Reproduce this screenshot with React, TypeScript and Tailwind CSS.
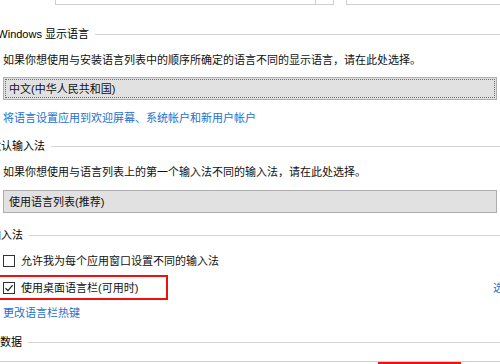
import type { ReactNode } from 'react';

function SectionHeader({ label, width }: { label: string; width: number }) {
  return (
    <div className="flex h-4 items-center">
      <div className="flex shrink-0 justify-end whitespace-nowrap leading-4 text-black" style={{ width }}>
        {label}
      </div>
      <div className="ml-[6px] h-px flex-1 bg-[#d4d4d4]" />
    </div>
  );
}

function Dropdown({ value, focused }: { value: string; focused?: boolean }) {
  return (
    <div className="mx-[3px] h-[23px] border border-[#adadad] bg-[#e1e1e1] p-px">
      <div
        className={`flex h-full items-center px-[3px] leading-4 text-[#111] ${
          focused ? 'border border-dotted border-[#6b6b6b]' : 'border border-transparent'
        }`}
      >
        {value}
      </div>
    </div>
  );
}

function Checkbox({ checked, children }: { checked?: boolean; children: ReactNode }) {
  return (
    <div className="flex h-4 items-center gap-[6px] pl-[3px] leading-4 text-[#111]">
      <span className="flex h-[12px] w-[12px] shrink-0 items-center justify-center border border-[#333] bg-white">
        {checked && (
          <svg width="10" height="10" viewBox="0 0 10 10">
            <path d="M1.5 5.2 L4 7.6 L8.6 2.2" fill="none" stroke="#222" strokeWidth="1.2" />
          </svg>
        )}
      </span>
      <span className="whitespace-nowrap">{children}</span>
    </div>
  );
}

export default function App() {
  return (
    <div className="h-[364px] w-[500px] overflow-hidden bg-white font-['Liberation_Sans','Noto_Sans_CJK_SC',sans-serif] text-[11px]">
      {/* top controls, mostly scrolled off */}
      <div className="flex h-[5px]">
        <div className="ml-[55px] w-[261px] border-x border-b border-[#cfcfcf]" />
        <div className="w-[18px] border-r border-b border-[#cfcfcf]" />
        <div className="ml-[12px] flex-1 border-l border-b border-[#cfcfcf]" />
      </div>

      <div className="mt-[21px]">
        <SectionHeader label="替代 Windows 显示语言" width={89} />
      </div>
      <p className="mt-[10px] whitespace-nowrap pl-[3px] leading-4 text-[#111]">
        如果你想使用与安装语言列表中的顺序所确定的语言不同的显示语言，请在此处选择。
      </p>
      <div className="mt-[9px]">
        <Dropdown value="中文(中华人民共和国)" focused />
      </div>
      <p className="mt-[10px] whitespace-nowrap pl-[3px] leading-4 text-[#1e6fcf]">
        将语言设置应用到欢迎屏幕、系统帐户和新用户帐户
      </p>

      <div className="mt-[12px]">
        <SectionHeader label="替代默认输入法" width={45} />
      </div>
      <p className="mt-[10px] whitespace-nowrap pl-[3px] leading-4 text-[#111]">
        如果你想使用与语言列表上的第一个输入法不同的输入法，请在此处选择。
      </p>
      <div className="mt-[10px]">
        <Dropdown value="使用语言列表(推荐)" />
      </div>

      <div className="mt-[14px]">
        <SectionHeader label="切换输入法" width={23} />
      </div>
      <div className="mt-[10px]">
        <Checkbox>允许我为每个应用窗口设置不同的输入法</Checkbox>
      </div>
      <div className="mt-[6px] flex items-center">
        <div className="flex h-[25px] w-[168px] shrink-0 items-center border-y-2 border-r-2 border-[#f01010]">
          <Checkbox checked>使用桌面语言栏(可用时)</Checkbox>
        </div>
        <span className="ml-[325px] whitespace-nowrap leading-4 text-[#1e6fcf]">选项</span>
      </div>
      <p className="mt-[5px] whitespace-nowrap pl-[3px] leading-4 text-[#1e6fcf]">更改语言栏热键</p>

      <div className="mt-[13px]">
        <SectionHeader label="个性化数据" width={22} />
      </div>
      <div className="mt-[11px] flex h-[3px] border-t border-[#cfcfcf]">
        <div className="ml-[378px] w-[83px] border-x-2 border-t-2 border-[#f01010]" />
      </div>
    </div>
  );
}
